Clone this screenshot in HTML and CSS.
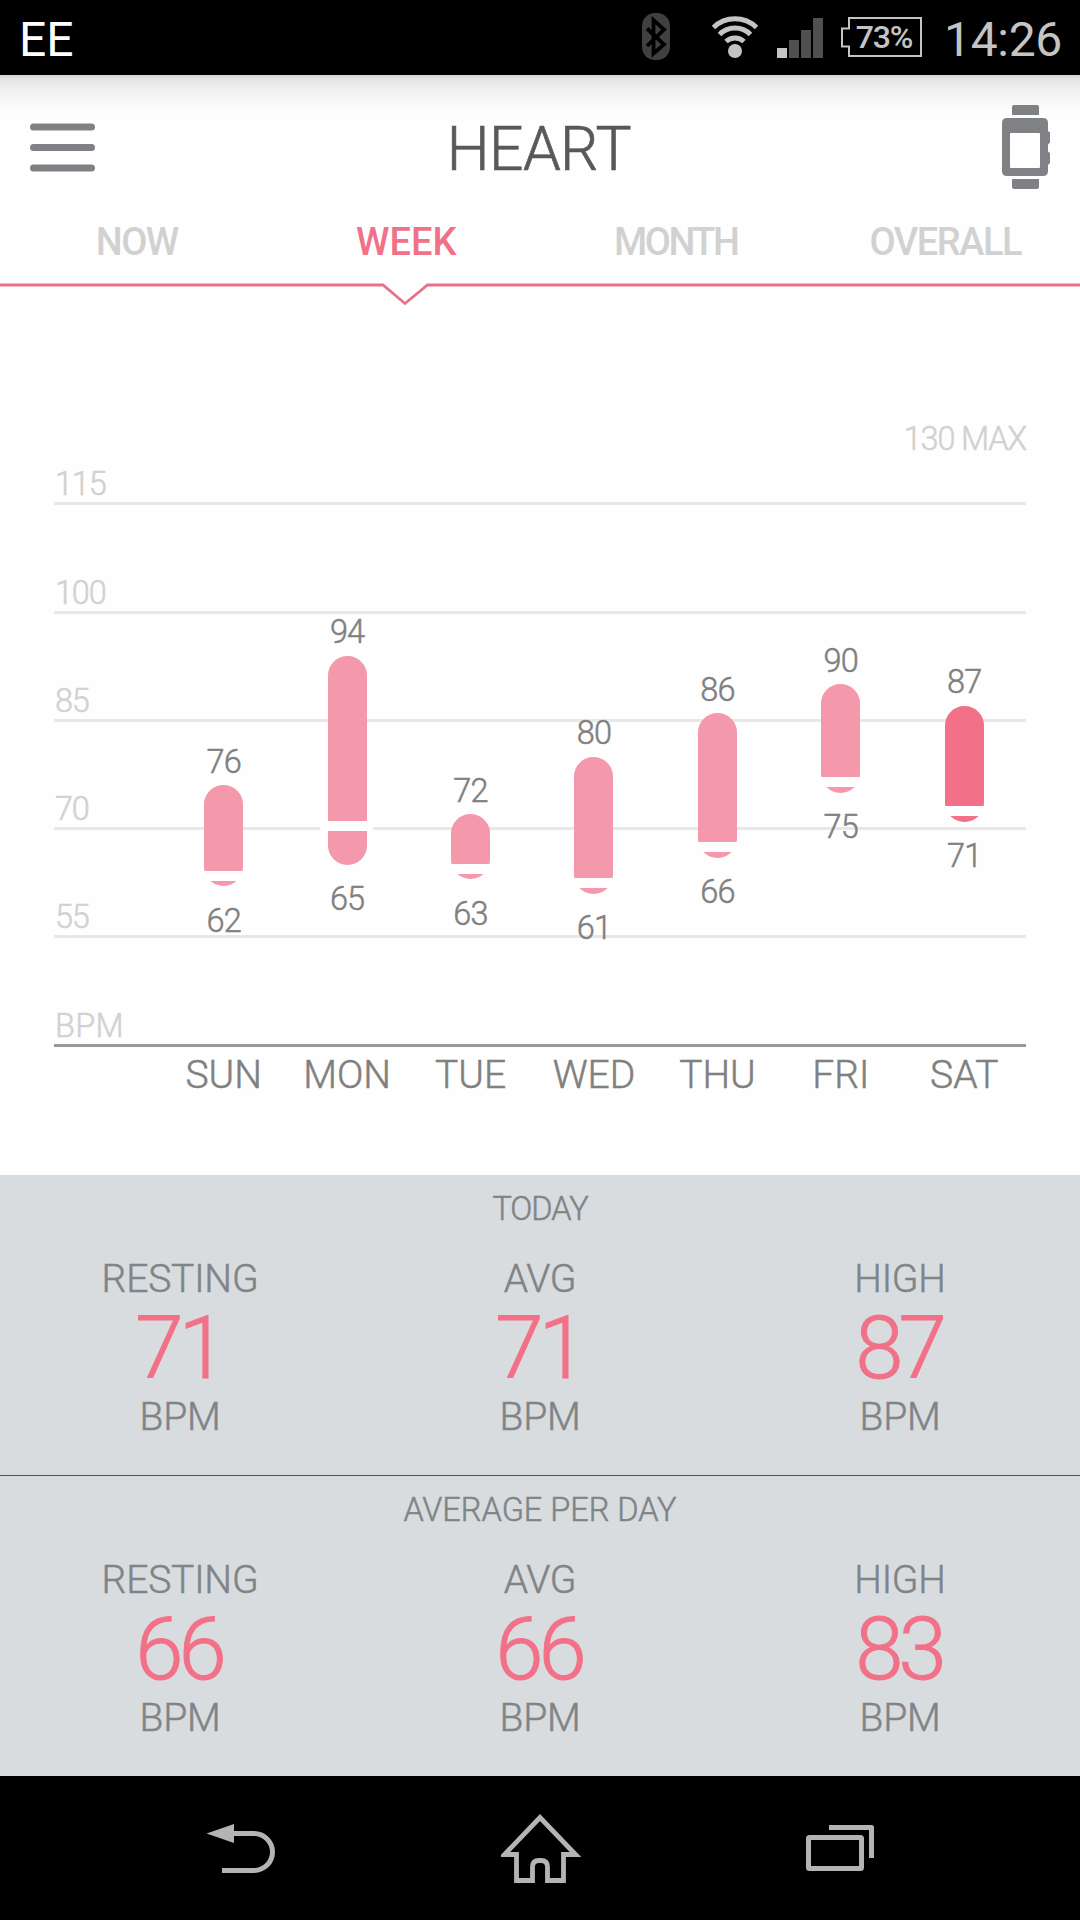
FILE: index.html
```html
<!DOCTYPE html>
<html lang="en">
<head>
<meta charset="utf-8">
<title>Heart</title>
<link rel="stylesheet" href="styles.css">
</head>
<body>
<div class="screen">
  <div class="status">
    <span class="carrier">EE</span>
    <svg class="status-icons" width="290" height="75" viewBox="638 0 290 75" aria-hidden="true">
      <rect x="642" y="13" width="28" height="47" rx="13" fill="#404040"/>
      <path d="M647 28.500L664 44.500L653.500 53.500V20L664 29.500L647 46" fill="none" stroke="#000" stroke-width="3.800"/>
      <g fill="none" stroke="#c4c4c4" stroke-width="5">
        <path d="M713.500 27.500A31 31 0 0 1 756.500 27.500"/>
        <path d="M719.500 34.500A22 22 0 0 1 750.500 34.500"/>
        <path d="M726 41.500A13 13 0 0 1 744 41.500"/>
      </g>
      <circle cx="735" cy="51" r="7" fill="#c4c4c4"/>
      <rect x="777" y="48" width="10" height="10" fill="#c4c4c4"/>
      <path d="M789 40h10v18h-10zM801 30h10v28h-10zM813 18h10v40h-10z" fill="#505050"/>
      <path d="M849 18H921V56H849V46.500H842V28.500H849Z" fill="none" stroke="#c4c4c4" stroke-width="2"/>
      <text class="battery-text" x="884" y="48" text-anchor="middle">73%</text>
    </svg>
    <span class="clock">14:26</span>
  </div>

  <header class="header">
    <svg class="menu" width="65" height="49" viewBox="0 0 65 49" aria-hidden="true">
      <path d="M3.500 4H61.500M3.500 24.500H61.500M3.500 45H61.500" stroke="#808185" stroke-width="7" stroke-linecap="round"/>
    </svg>
    <h1 class="title">HEART</h1>
    <svg class="watch" width="48" height="84" viewBox="0 0 48 84" fill="#808185" aria-hidden="true">
      <path d="M10 10V2q0-2 2-2h23q2 0 2 2v8zM10 74v8q0 2 2 2h23q2 0 2-2v-8z"/>
      <path fill-rule="evenodd" d="M5 13H41q5 0 5 5V26l2 1.500v10l-2 2v7l2 1.500v10l-2 2V66q0 5-5 5H5q-5 0-5-5V18q0-5 5-5zM9 28q-1 0-1 1V62q0 1 1 1H37q1 0 1-1V29q0-1-1-1z"/>
    </svg>
  </header>

  <nav class="tabs">
    <span class="tab">NOW</span>
    <span class="tab tab-active">WEEK</span>
    <span class="tab tab-month">MONTH</span>
    <span class="tab">OVERALL</span>
  </nav>
  <svg class="tab-line" width="1080" height="24" viewBox="0 0 1080 24" aria-hidden="true">
    <path d="M0 3H383L405 21.500L427.500 3H1080" fill="none" stroke="#e8728a" stroke-width="2.800"/>
  </svg>

  <section class="chart">
    <div class="gridrow"><span>115</span><span class="max">130 MAX</span></div>
    <div class="gridrow"><span>100</span></div>
    <div class="gridrow"><span>85</span></div>
    <div class="gridrow"><span>70</span></div>
    <div class="gridrow"><span>55</span></div>
    <div class="gridrow axis"><span>BPM</span></div>
    <div class="bars">
      <div class="day" style="--high:76;--low:62;--rest:63"><span class="value">76</span><i class="bar"></i><span class="value">62</span></div>
      <div class="day" style="--high:94;--low:65;--rest:70"><span class="value">94</span><i class="bar"></i><span class="value">65</span></div>
      <div class="day" style="--high:72;--low:63;--rest:64"><span class="value">72</span><i class="bar"></i><span class="value">63</span></div>
      <div class="day" style="--high:80;--low:61;--rest:62"><span class="value">80</span><i class="bar"></i><span class="value">61</span></div>
      <div class="day" style="--high:86;--low:66;--rest:67"><span class="value">86</span><i class="bar"></i><span class="value">66</span></div>
      <div class="day" style="--high:90;--low:75;--rest:76"><span class="value">90</span><i class="bar"></i><span class="value">75</span></div>
      <div class="day today" style="--high:87;--low:71;--rest:72"><span class="value">87</span><i class="bar"></i><span class="value">71</span></div>
    </div>
    <div class="daynames">
      <span>SUN</span><span>MON</span><span>TUE</span><span>WED</span><span>THU</span><span>FRI</span><span>SAT</span>
    </div>
  </section>

  <section class="summary">
    <h2 class="summary-title summary-title-today">TODAY</h2>
    <div class="stats">
      <div class="stat"><span class="label">RESTING</span><span class="number">71</span><span class="label">BPM</span></div>
      <div class="stat"><span class="label">AVG</span><span class="number">71</span><span class="label">BPM</span></div>
      <div class="stat"><span class="label">HIGH</span><span class="number">87</span><span class="label">BPM</span></div>
    </div>
  </section>
  <section class="summary summary-average">
    <h2 class="summary-title">AVERAGE PER DAY</h2>
    <div class="stats">
      <div class="stat"><span class="label">RESTING</span><span class="number">66</span><span class="label">BPM</span></div>
      <div class="stat"><span class="label">AVG</span><span class="number">66</span><span class="label">BPM</span></div>
      <div class="stat"><span class="label">HIGH</span><span class="number">83</span><span class="label">BPM</span></div>
    </div>
  </section>

  <footer class="navbar">
    <svg width="70" height="72" viewBox="206 1812 70 72" aria-hidden="true">
      <path d="M206.500 1833.500L234 1824V1843Z" fill="#b4b4b4"/>
      <path d="M233 1833.500H254A18.500 18.500 0 0 1 254 1870.500H222" fill="none" stroke="#b4b4b4" stroke-width="5"/>
    </svg>
    <svg width="80" height="72" viewBox="501 1812 80 72" aria-hidden="true">
      <path d="M540 1817.500L504.500 1854.500H516.500V1880.500H532.500V1867Q532.500 1860.500 539 1860.500H541Q547.500 1860.500 547.500 1867V1880.500H563.500V1854.500H575.500Z" fill="none" stroke="#b4b4b4" stroke-width="4.800"/>
    </svg>
    <svg width="70" height="72" viewBox="805 1812 70 72" aria-hidden="true">
      <rect x="808.500" y="1837.500" width="53" height="31" rx="1" fill="none" stroke="#b4b4b4" stroke-width="5"/>
      <path d="M829 1827.500H871.500V1858" fill="none" stroke="#b4b4b4" stroke-width="5" stroke-linejoin="round"/>
    </svg>
  </footer>
</div>
</body>
</html>
```
FILE: styles.css
```css
* {
  box-sizing: border-box;
}

body {
  margin: 0;
  background: #fefefe;
  font-family: Roboto, "Liberation Sans", sans-serif;
  font-weight: 300;
}

svg {
  display: block;
}

.screen {
  width: 1080px;
  height: 1920px;
  display: flex;
  flex-direction: column;
  overflow: hidden;
}

.status {
  height: 75px;
  flex: none;
  display: flex;
  align-items: center;
  padding: 4px 16px 0 19px;
  background: #000;
  font-size: 48px;
  line-height: 56px;
  font-weight: 400;
}

.carrier {
  color: #fff;
}

.status-icons {
  margin: -4px 16px 0 auto;
}

.battery-text {
  fill: #c4c4c4;
  font-size: 32px;
  font-weight: 500;
  letter-spacing: -1.200px;
}

.clock {
  width: 120px;
  color: #c4c4c4;
  font-weight: 400;
  letter-spacing: -0.300px;
}

.header {
  height: 136px;
  flex: none;
  display: flex;
  align-items: flex-start;
  justify-content: space-between;
  padding: 30px 30px 0;
  background: linear-gradient(#d6d6d6, #e6e6e6 5px, #f0f0f0 15px, #f8f8f8 26px, #fefefe 38px);
}

.menu {
  margin-top: 18px;
}

.title {
  margin: 15px 0 0 -19px;
  font-size: 60.500px;
  line-height: 60px;
  font-weight: 300;
  letter-spacing: -0.600px;
  color: #58595b;
  -webkit-text-stroke: 0.700px;
}

.tabs {
  flex: none;
  display: grid;
  grid-template-columns: repeat(4, 1fr);
  height: 71px;
  padding: 12px 0 0 2px;
  text-align: center;
  font-size: 38px;
  line-height: 38px;
  font-weight: 500;
  letter-spacing: -1.500px;
  color: #d1d1d1;
}

.tab-active {
  letter-spacing: 0;
  color: #f07188;
}

.tab-month {
  letter-spacing: -2.500px;
}

.tab-line {
  flex: none;
}

.chart {
  --unit: 7.217px;
  position: relative;
  height: 875px;
  flex: none;
  margin-top: -6px;
  padding: 97px 54px 0;
  font-size: 32.500px;
  line-height: 32px;
  -webkit-text-stroke: 0.500px;
}

.gridrow {
  height: 108.250px;
  display: flex;
  align-items: flex-end;
  justify-content: space-between;
  padding: 0 0 2px 1px;
  border-bottom: 3px solid #e8e8e8;
  color: #d1d1d1;
  letter-spacing: -1.200px;
}

.max {
  padding-bottom: 45px;
}

.axis {
  border-color: #999;
  letter-spacing: 0.300px;
}

/* Columns drawn over the grid lines; 115 sits 107px below the top of the plot. */
.bars {
  position: absolute;
  top: 97px;
  left: 162px;
  right: 54px;
  display: grid;
  grid-template-columns: repeat(7, 1fr);
  color: #808080;
}

.day {
  display: flex;
  flex-direction: column;
  align-items: center;
  padding-top: calc(67.300px + (115 - var(--high)) * var(--unit));
}

.value {
  letter-spacing: -0.800px;
}

.bar {
  position: relative;
  width: 39px;
  height: calc((var(--high) - var(--low)) * var(--unit));
  margin: 7.700px 0 18.500px;
  border-radius: 19.500px;
  background: #f498ab;
}

.today .bar {
  background: #f27188;
}

/* White notch at the resting rate. */
.bar::after {
  content: "";
  position: absolute;
  left: -8px;
  right: -6.500px;
  top: calc((var(--high) - var(--rest)) * var(--unit) - 8px);
  height: 10px;
  background: #fefefe;
}

.daynames {
  display: grid;
  grid-template-columns: repeat(7, 1fr);
  padding-left: 108px;
  margin-top: 9px;
  text-align: center;
  font-size: 39px;
  line-height: 39px;
  color: #808080;
}

.summary {
  height: 300px;
  flex: none;
  padding-top: 18px;
  background: #d8dcdf;
  text-align: center;
  color: #808487;
  -webkit-text-stroke: 0.500px;
}

.summary-average {
  height: 301px;
  border-top: 1px solid #505356;
}

.summary-title {
  margin: 0;
  font-size: 32.500px;
  line-height: 32px;
  font-weight: 300;
}

.summary-title-today {
  letter-spacing: -1px;
}

.stats {
  display: grid;
  grid-template-columns: repeat(3, 1fr);
  margin-top: 35px;
}

.stat {
  display: flex;
  flex-direction: column;
  align-items: center;
}

.label {
  font-size: 39px;
  line-height: 39px;
  letter-spacing: -0.200px;
}

.number {
  margin: 7px 3px 7px 0;
  font-size: 87px;
  line-height: 85px;
  letter-spacing: -5px;
  color: #f27188;
  -webkit-text-stroke: 1px;
}

.navbar {
  flex: 1;
  display: flex;
  align-items: center;
  justify-content: space-between;
  padding: 0 205px 0 206px;
  background: #000;
}
```
